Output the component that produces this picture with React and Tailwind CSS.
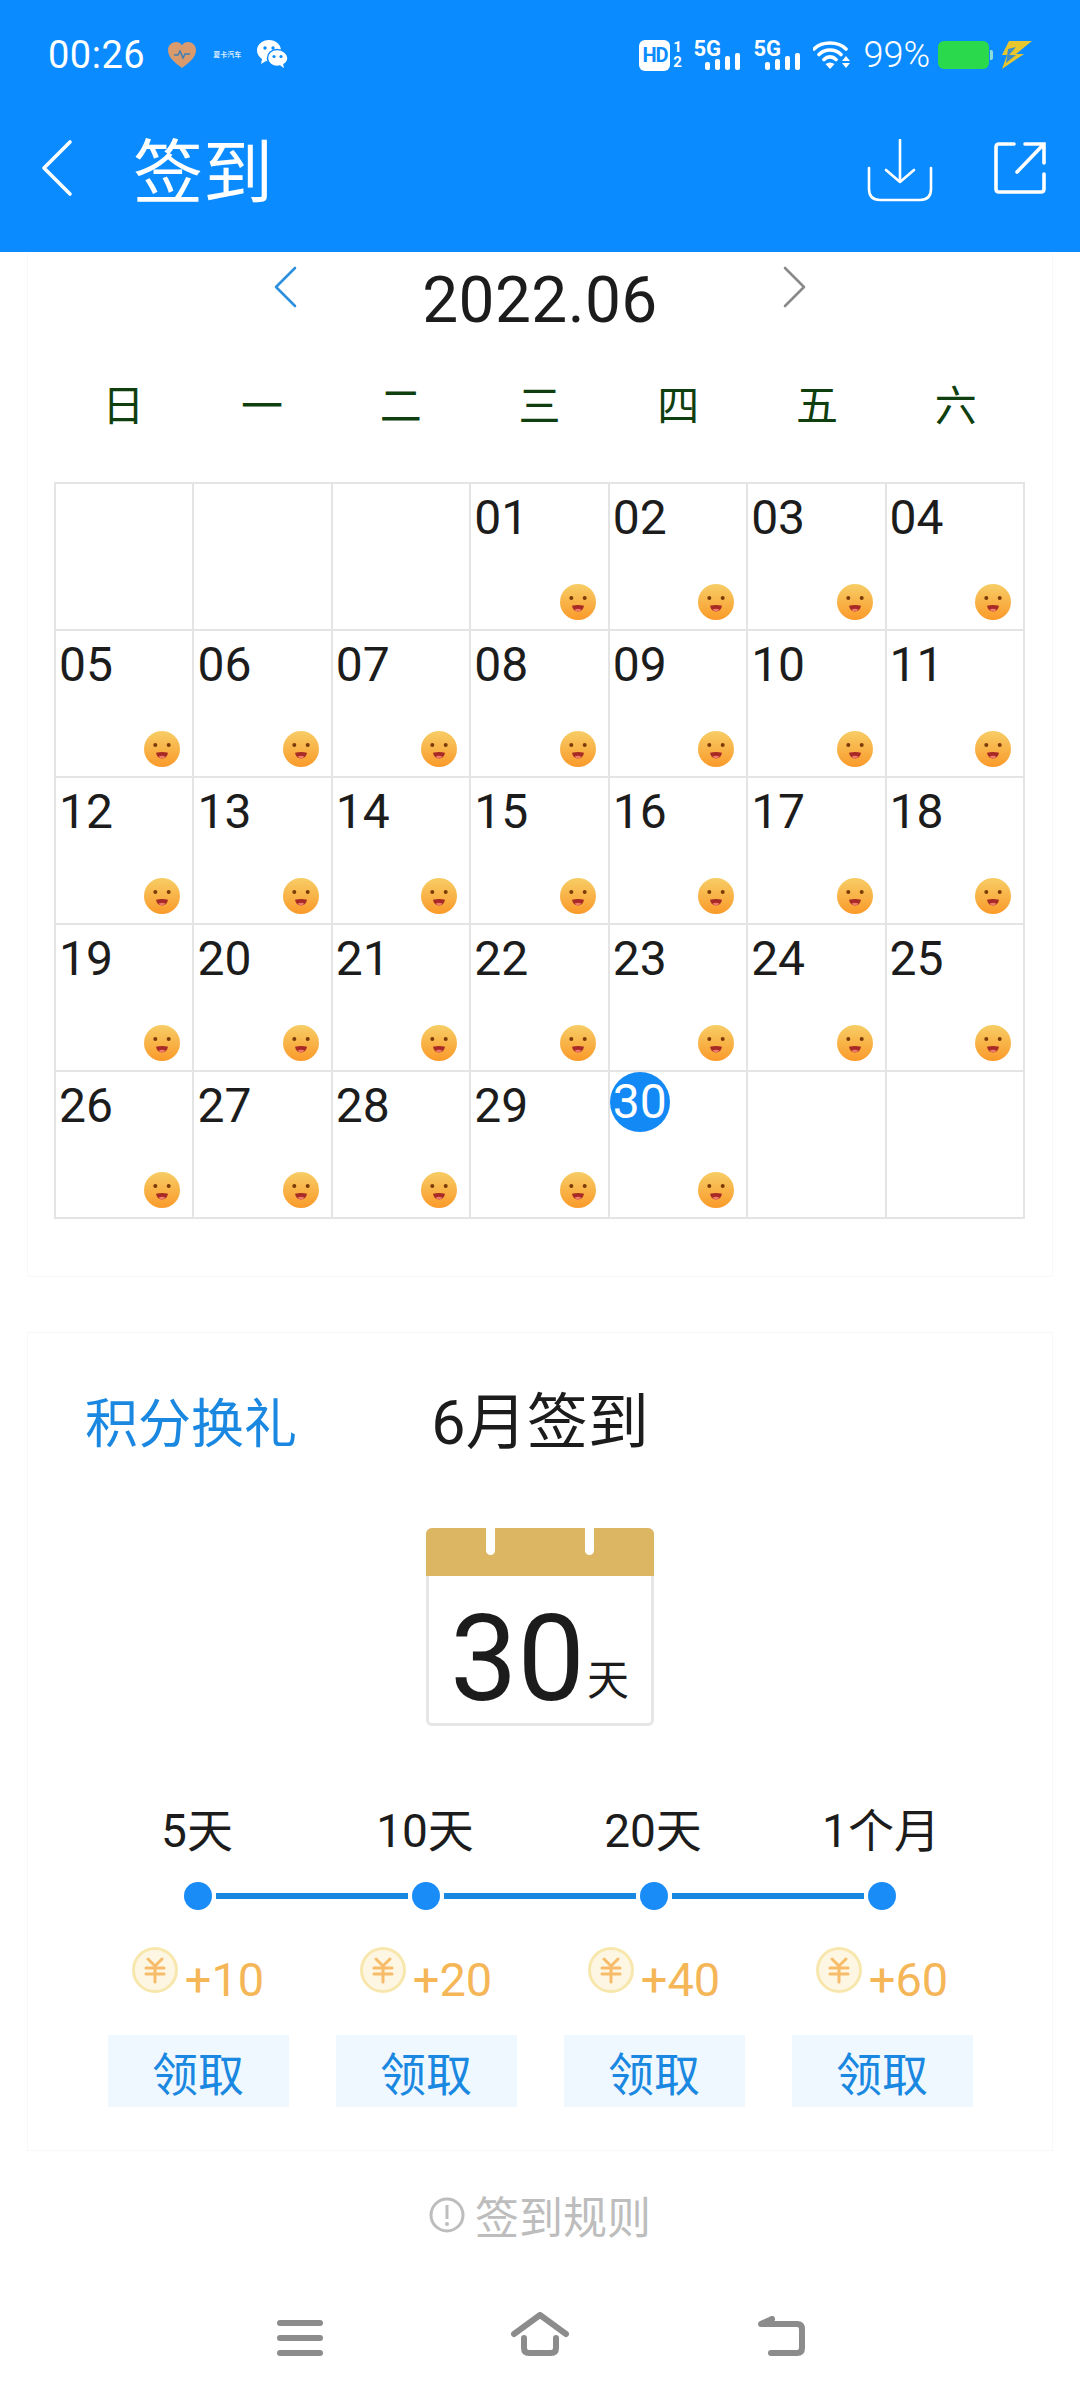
const font = "font-['Roboto','Noto_Sans_CJK_SC',sans-serif]";

function Emoji() {
  return (
    <svg width="36" height="36" viewBox="0 0 36 36" className="self-end">
      <defs>
        <linearGradient id="emo" x1="0" y1="0" x2="0" y2="1">
          <stop offset="0" stopColor="#f7cd66" />
          <stop offset="1" stopColor="#fa9a2a" />
        </linearGradient>
      </defs>
      <circle cx="18" cy="18" r="18" fill="url(#emo)" />
      <circle cx="11.3" cy="14" r="2" fill="#7a3a0a" />
      <circle cx="24.7" cy="14" r="2" fill="#7a3a0a" />
      <path d="M12 21.8 Q18 20.4 24 21.8 Q23 27.5 18 27.5 Q13 27.5 12 21.8Z" fill="#a82a26" />
      <path d="M14.5 25.5 Q18 24 21.5 25.5 Q20 27.5 18 27.5 Q16 27.5 14.5 25.5Z" fill="#ef7a6a" />
    </svg>
  );
}

function Coin() {
  return (
    <svg width="46" height="46" viewBox="0 0 46 46" className="-mt-[18px]">
      <circle cx="23" cy="23" r="21.5" fill="#fdf6e3" stroke="#f8e7ac" strokeWidth="3" />
      <path d="M16 12 L23 19 L30 12 M23 19 V35 M14 21 H32 M14 27 H32" fill="none" stroke="#f7bc6a" strokeWidth="3" strokeLinecap="round" />
    </svg>
  );
}

function StatusBars() {
  return (
    <div className="flex flex-col w-[47px] h-[30px] relative">
      <span className="text-[22px] leading-[17px] font-bold text-white">5G</span>
      <svg width="35" height="17" viewBox="0 0 35 17" className="self-end -mt-[4px]">
        <rect x="0" y="9" width="5" height="8" rx="2" fill="#fff" />
        <rect x="10" y="6" width="5" height="11" rx="2" fill="#fff" />
        <rect x="20" y="3" width="5" height="14" rx="2" fill="#fff" />
        <rect x="30" y="0" width="5" height="17" rx="2" fill="#fff" />
      </svg>
    </div>
  );
}

const cells = [
  null, null, null, "01", "02", "03", "04",
  "05", "06", "07", "08", "09", "10", "11",
  "12", "13", "14", "15", "16", "17", "18",
  "19", "20", "21", "22", "23", "24", "25",
  "26", "27", "28", "29", "30", null, null,
];

const rewards = [
  { day: "5天", pts: "+10" },
  { day: "10天", pts: "+20" },
  { day: "20天", pts: "+40" },
  { day: "1个月", pts: "+60" },
];

export default function App() {
  return (
    <div className={`${font} w-[1080px] h-[2400px] bg-white flex flex-col overflow-hidden text-[#1c1c1c]`}>
      {/* blue header */}
      <div className="bg-[#0a8bff] h-[252px] shrink-0 flex flex-col text-white">
        <div className="h-[110px] flex items-center pl-[48px] pr-[48px]">
          <span className="text-[38px] leading-none tracking-[0.5px]">00:26</span>
          <svg width="28" height="27" viewBox="0 0 28 27" className="ml-[23px]">
            <path d="M14 26 C6 20 0 15 0 8 C0 3 4 0 8 0 C11 0 13 1.5 14 3.5 C15 1.5 17 0 20 0 C24 0 28 3 28 8 C28 15 22 20 14 26Z" fill="#d99a6e" />
            <path d="M6 13 H10 L12 9 L15 16 L17 12 H22" fill="none" stroke="#3d7fb8" strokeWidth="1.5" />
          </svg>
          <span className="ml-[17px] w-[30px] text-[7px] leading-[8px] font-bold text-[#d8ecff] whitespace-nowrap overflow-hidden">夏卡汽车</span>
          <svg width="31" height="31" viewBox="0 0 31 31" className="ml-[14px]">
            <path d="M12 0 C5.5 0 0 4.5 0 10.5 C0 14 2 17 5 19 L4 24 L9 21 C10 21.3 11 21.4 12 21.4 C19 21.4 24 16 24 10.5 C24 4.5 18.5 0 12 0Z" fill="#fff" />
            <circle cx="8" cy="8" r="1.7" fill="#0a8bff" />
            <circle cx="16" cy="8" r="1.7" fill="#0a8bff" />
            <path d="M20 9.5 C14.5 9.5 10.5 13.5 10.5 18 C10.5 23 15 26.5 20 26.5 C21 26.5 22 26.3 23 26 L28 30 L27 24.5 C29.5 23 31 20.5 31 18 C31 13.5 26 9.5 20 9.5Z" fill="#fff" stroke="#0a8bff" strokeWidth="1.5" />
            <circle cx="17" cy="16.5" r="1.6" fill="#0a8bff" />
            <circle cx="24" cy="16.5" r="1.6" fill="#0a8bff" />
          </svg>
          <div className="flex-1" />
          <div className="w-[31px] h-[31px] bg-white rounded-[6px] flex items-center justify-center text-[#0a8bff] text-[20px] font-bold leading-none tracking-[-1px]">HD</div>
          <div className="flex flex-col ml-[1px] w-[12px] text-[15px] leading-[15px] font-bold items-center">
            <span>1</span>
            <span>2</span>
          </div>
          <div className="ml-[10px]"><StatusBars /></div>
          <div className="ml-[13px]"><StatusBars /></div>
          <svg width="38" height="30" viewBox="0 0 38 30" className="ml-[13px]">
            <path d="M1 9 C9 1 25 1 33 9 M6 14.5 C12 8.5 22 8.5 28 14.5 M11 19.5 C14.5 16 19.5 16 23 19.5" fill="none" stroke="#fff" strokeWidth="3.6" strokeLinecap="round" />
            <path d="M12.5 24 Q17 21 21.5 24 L17 29Z" fill="#fff" />
            <path d="M33 16 L37 21 H29Z M29 23 H37 L33 28Z" fill="#fff" />
          </svg>
          <span className="ml-[12px] text-[36px] leading-none font-light">99%</span>
          <div className="ml-[8px] w-[51px] h-[28px] rounded-[6px] bg-[#2bd94c]" />
          <div className="w-[3px] h-[10px] ml-[1px] bg-[#8fdcd8] rounded-r-[2px]" />
          <svg width="30" height="28" viewBox="0 0 30 28" className="ml-[9px]">
            <path d="M7 0 H30 L14 13 H22 L0 28 L5 14 H0Z" fill="#e8c62d" />
            <path d="M6 8 L14 6 L7 14 H14 L4 22 Z" fill="#3b8cc9" />
          </svg>
        </div>
        <div className="flex-1 flex items-center pl-[40px] pr-[33px] pb-[26px]">
          <svg width="34" height="58" viewBox="0 0 34 58">
            <path d="M30 3 L4 29 L30 55" fill="none" stroke="#fff" strokeWidth="3.6" strokeLinecap="round" strokeLinejoin="round" />
          </svg>
          <span className="ml-[59px] text-[70px] leading-none font-['Noto_Sans_CJK_SC',sans-serif] font-normal">签到</span>
          <div className="flex-1" />
          <svg width="66" height="64" viewBox="0 0 66 64" className="mt-[6px]">
            <path d="M2 29 V50 Q2 61 13 61 H53 Q64 61 64 50 V29" fill="none" stroke="#fff" strokeWidth="2.6" strokeLinecap="round" />
            <path d="M33 1 V43 M19 31 L33 43 L47 31" fill="none" stroke="#fff" strokeWidth="2.6" strokeLinecap="round" strokeLinejoin="round" />
          </svg>
          <svg width="54" height="54" viewBox="0 0 54 54" className="ml-[60px]">
            <path d="M21 3 H6 Q3 3 3 6 V48 Q3 51 6 51 H48 Q51 51 51 48 V33" fill="none" stroke="#fff" strokeWidth="3.6" strokeLinecap="round" />
            <path d="M24 31 L50 4 M32 3 H51 V22" fill="none" stroke="#fff" strokeWidth="3.6" strokeLinecap="round" />
          </svg>
        </div>
      </div>

      {/* calendar card */}
      <div className="mx-[27px] h-[1025px] border border-t-0 border-[#f8f8f8] shrink-0">
        <div className="h-[98px] flex items-center justify-center gap-[125px]">
          <svg width="24" height="42" viewBox="0 0 24 42" className="-mt-[28px]">
            <path d="M22 2 L3 21 L22 40" fill="none" stroke="#2e90dc" strokeWidth="2.6" strokeLinecap="round" strokeLinejoin="round" />
          </svg>
          <span className="text-[64px] leading-none tracking-[0.4px]">2022.06</span>
          <svg width="24" height="42" viewBox="0 0 24 42" className="-mt-[28px]">
            <path d="M2 2 L21 21 L2 40" fill="none" stroke="#8a8a8a" strokeWidth="2.6" strokeLinecap="round" strokeLinejoin="round" />
          </svg>
        </div>
        <div className="ml-[26px] w-[971px] grid grid-cols-7 h-[106px] mb-[26px] items-center">
          {["日", "一", "二", "三", "四", "五", "六"].map((d) => (
            <span key={d} className="text-center text-[42px] leading-none text-[#0f3f0f] font-['Noto_Sans_CJK_SC',sans-serif]">{d}</span>
          ))}
        </div>
        <div className="ml-[26px] w-[971px] grid grid-cols-7 auto-rows-[147px] border-l-2 border-t-2 border-[#e4e4e4]">
          {cells.map((c, i) => (
            <div key={i} className="border-r-2 border-b-2 border-[#e4e4e4] flex flex-col justify-between pl-[3px] pr-[12px] pb-[9px] min-w-0">
              {c === "30" ? (
                <span className="w-[60px] h-[60px] -ml-[3px] rounded-full bg-[#1389f5] text-white text-[48px] leading-[60px] text-center">30</span>
              ) : (
                <span className="text-[48px] leading-[68px] h-[68px]">{c}</span>
              )}
              {c && <Emoji />}
            </div>
          ))}
        </div>
      </div>

      {/* reward card */}
      <div className="mx-[27px] mt-[55px] h-[819px] border border-[#f8f8f8] shrink-0 flex flex-col">
        <div className="mt-[54px] h-[60px] grid grid-cols-[1fr_auto_1fr] items-center pl-[58px]">
          <span className="text-[53px] leading-none text-[#1a88e0] font-['Noto_Sans_CJK_SC',sans-serif] -ml-[1px]">积分换礼</span>
          <span className="text-[61px] leading-none -ml-[58px] pt-[6px]">6月签到</span>
          <span />
        </div>
        <div className="mt-[81px] self-center -ml-[1px] w-[228px] h-[198px] rounded-[6px] border-[3px] border-t-0 border-[#e6e6e6] flex flex-col">
          <div className="-mx-[3px] h-[48px] bg-[#dcb662] rounded-t-[6px] flex justify-center gap-[90px] shrink-0">
            <div className="w-[9px] h-[27px] bg-white rounded-b-full" />
            <div className="w-[9px] h-[27px] bg-white rounded-b-full" />
          </div>
          <div className="flex-1 flex items-baseline justify-center pt-[18px]">
            <span className="text-[120px] leading-[130px]">30</span>
            <span className="text-[42px] leading-none ml-[2px] -translate-y-[5px] font-['Noto_Sans_CJK_SC',sans-serif]">天</span>
          </div>
        </div>
        <div className="mt-[75px] ml-[55px] grid grid-cols-4 w-[912px]">
          {rewards.map((r) => (
            <span key={r.day} className="text-center text-[46px] leading-[60px]">{r.day}</span>
          ))}
        </div>
        <div className="mt-[21px] ml-[156px] flex items-center w-[712px]">
          {[0, 1, 2].map((i) => (
            <div key={i} className="flex items-center flex-1">
              <div className="w-[28px] h-[28px] rounded-full bg-[#1a8cf8] shrink-0" />
              <div className="mx-[4px] flex-1 h-[6px] bg-[#1a88e0]" />
            </div>
          ))}
          <div className="w-[28px] h-[28px] rounded-full bg-[#1a8cf8] shrink-0" />
        </div>
        <div className="mt-[39px] ml-[56px] grid grid-cols-4 w-[912px] h-[60px] items-center">
          {rewards.map((r) => (
            <div key={r.pts} className="flex items-center justify-center gap-[7px]">
              <Coin />
              <span className="text-[47px] leading-none text-[#f5b658]">{r.pts}</span>
            </div>
          ))}
        </div>
        <div className="mt-[26px] ml-[56px] grid grid-cols-4 w-[912px]">
          {rewards.map((r) => (
            <div key={r.pts} className="justify-self-center w-[181px] h-[72px] bg-[#f0f8ff] flex items-center justify-center text-[46px] leading-none text-[#1a88e0] font-['Noto_Sans_CJK_SC',sans-serif]">领取</div>
          ))}
        </div>
      </div>

      {/* rules */}
      <div className="mt-[39px] h-[50px] flex items-center justify-center gap-[10px] text-[#bdbdbd] shrink-0">
        <svg width="36" height="36" viewBox="0 0 36 36">
          <circle cx="18" cy="18" r="16" fill="none" stroke="#bdbdbd" strokeWidth="3" />
          <path d="M18 8 V22" stroke="#bdbdbd" strokeWidth="3" />
          <circle cx="18" cy="27" r="2" fill="#bdbdbd" />
        </svg>
        <span className="text-[44px] leading-none font-['Noto_Sans_CJK_SC',sans-serif]">签到规则</span>
      </div>

      {/* nav bar */}
      <div className="mt-[72px] ml-[277px] w-[528px] flex justify-between items-end">
        <svg width="46" height="36" viewBox="0 0 46 36">
          <path d="M3 3 H43 M3 18 H43 M3 33 H43" stroke="#8c8c8c" strokeWidth="6" strokeLinecap="round" />
        </svg>
        <svg width="58" height="44" viewBox="0 0 58 44">
          <path d="M3 22 L29 3 L55 22 M13 26 V36 Q13 41 18 41 H40 Q45 41 45 36 V26" fill="none" stroke="#8c8c8c" strokeWidth="6" strokeLinecap="round" strokeLinejoin="round" />
        </svg>
        <svg width="48" height="40" viewBox="0 0 48 40">
          <path d="M14 37 H40 Q45 37 45 32 V13 Q45 8 40 8 H4 L15 3" fill="none" stroke="#8c8c8c" strokeWidth="6" strokeLinecap="round" strokeLinejoin="round" />
        </svg>
      </div>
    </div>
  );
}
